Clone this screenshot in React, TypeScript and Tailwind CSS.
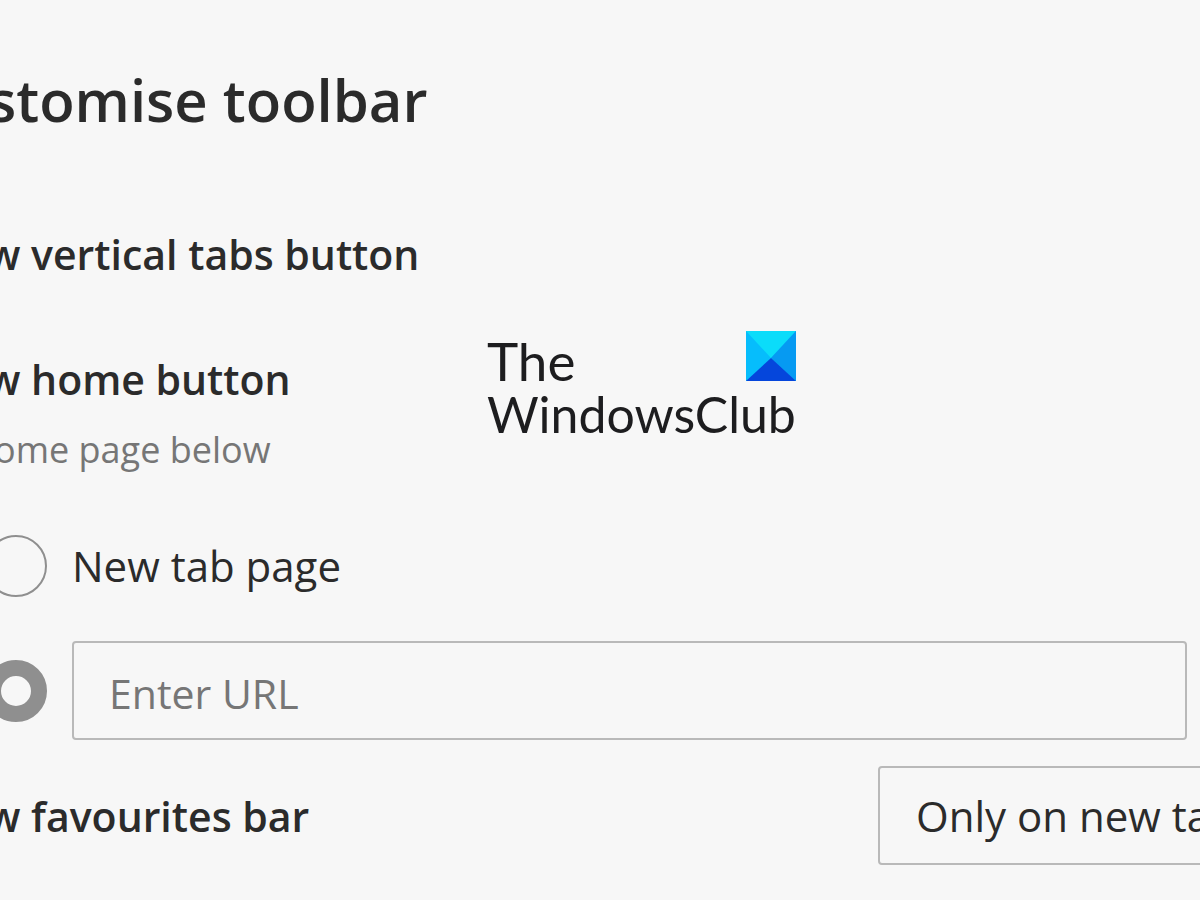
import { useState } from "react";

const rowTitle = "-ml-[13px] whitespace-nowrap text-[41px] leading-[56px] font-semibold";
const field = "h-[99px] rounded-[4px] border-2 border-[#b9b9b9] bg-transparent outline-none";
const radio =
  "-ml-[15px] size-[62px] shrink-0 appearance-none rounded-full border-2 border-[#8f8f8f] checked:border-[16px]";

function Watermark() {
  return (
    <div className="pointer-events-none absolute top-[331px] left-[487px] w-[310px] font-['Lato',sans-serif] text-[#1d1d1f]">
      <div className="flex items-start justify-between pr-px">
        <span className="pt-[3px] text-[53px] leading-[54px]">The</span>
        <svg width="50" height="50" viewBox="0 0 50 50" aria-hidden="true">
          <path d="M0 0H50V50H0Z" fill="#06bdfc" />
          <path d="M0 0H50L25 27Z" fill="#0bdcfa" />
          <path d="M50 0V50L25 27Z" fill="#069af2" />
          <path d="M0 50L25 27L50 50Z" fill="#0546dc" />
        </svg>
      </div>
      <div className="text-[50px] leading-[52px]">WindowsClub</div>
    </div>
  );
}

export default function App() {
  const [home, setHome] = useState("url");
  const [url, setUrl] = useState("");

  return (
    <main className="relative min-h-screen overflow-hidden bg-[#f7f7f7] pt-[60px] font-['Open_Sans','Noto_Sans',sans-serif] text-[#2b2b2b]">
      <h1 className="-ml-3 text-[58px] leading-[80px] font-semibold whitespace-nowrap">
        stomise toolbar
      </h1>
      <h2 className={`${rowTitle} mt-[86px]`}>w vertical tabs button</h2>
      <section className="mt-[69px]">
        <h2 className={rowTitle}>w home button</h2>
        <p className="-ml-[6px] mt-[18px] text-[36px] leading-[50px] text-[#767676]">ome page below</p>
        <div className="mt-[60px] flex items-center">
          <input
            id="home-newtab"
            type="radio"
            name="home"
            checked={home === "newtab"}
            onChange={() => setHome("newtab")}
            className={radio}
          />
          <label htmlFor="home-newtab" className="ml-[25px] text-[42px] leading-[56px]">
            New tab page
          </label>
        </div>
        <div className="mt-[44px] mr-[13px] flex items-center">
          <input
            type="radio"
            name="home"
            aria-label="Enter URL"
            checked={home === "url"}
            onChange={() => setHome("url")}
            className={radio}
          />
          <input
            type="text"
            aria-label="Home page URL"
            placeholder="Enter URL"
            value={url}
            onChange={(e) => setUrl(e.target.value)}
            className={`${field} ml-[25px] min-w-0 flex-1 px-[35px] pt-1 text-[41px] placeholder:text-[#767676]`}
          />
        </div>
      </section>
      <div className="mt-[26px] flex items-center justify-between">
        <label htmlFor="favourites" className={rowTitle}>
          w favourites bar
        </label>
        <select
          id="favourites"
          className={`${field} -mr-[100px] w-[422px] shrink-0 appearance-none px-9 text-[42px]`}
        >
          <option>Only on new tabs</option>
          <option>Always</option>
          <option>Never</option>
        </select>
      </div>
      <Watermark />
    </main>
  );
}
